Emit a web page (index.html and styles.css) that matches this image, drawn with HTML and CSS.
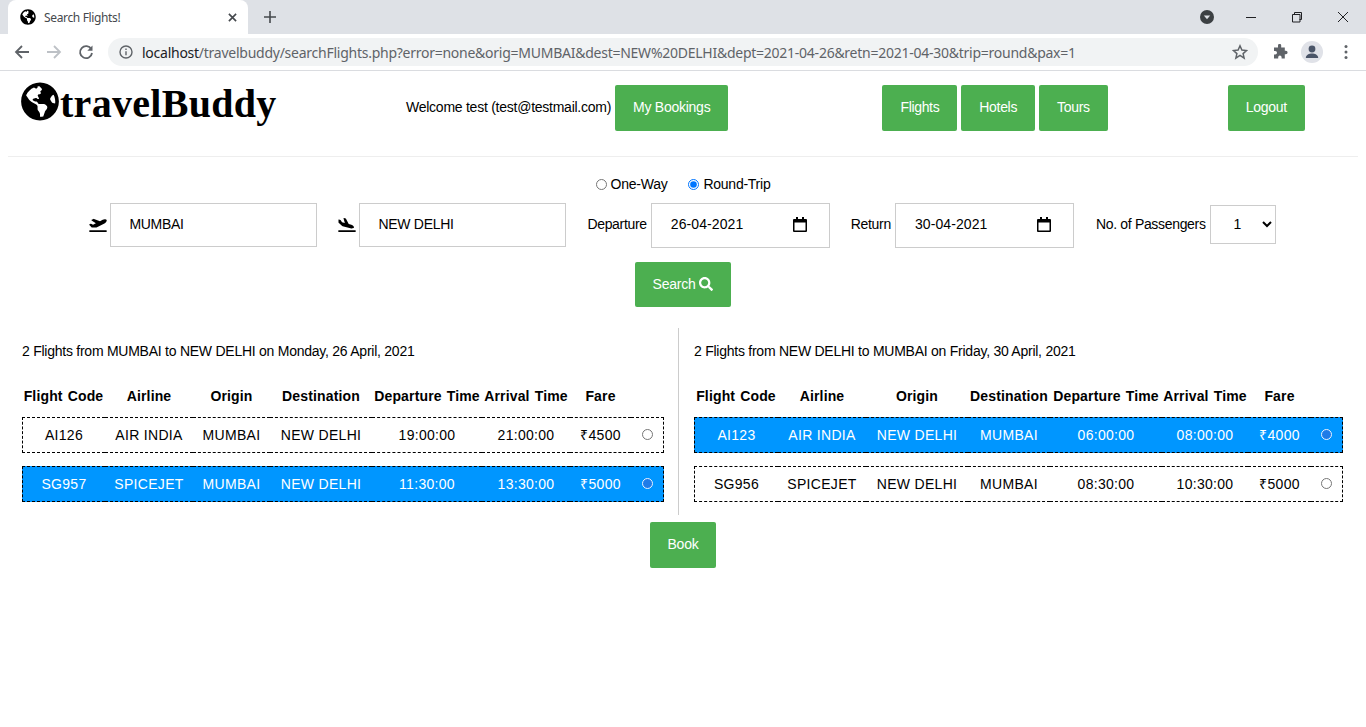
FILE: index.html
```html
<!DOCTYPE html>
<html lang="en">
<head>
<meta charset="utf-8">
<title>Search Flights!</title>
<link rel="stylesheet" href="styles.css">
</head>
<body>
<div class="browser">
  <div class="tabstrip">
    <div class="tab">
      <svg class="tab-globe" viewBox="0 0 496 512"><path d="M248 8C111.03 8 0 119.03 0 256s111.03 248 248 248 248-111.03 248-248S384.97 8 248 8zm82.29 357.6c-3.9 3.88-7.99 7.95-11.31 11.28-2.99 3-5.1 6.7-6.17 10.71-1.51 5.66-2.73 11.38-4.77 16.87l-17.39 46.85c-13.76 3-28 4.69-42.65 4.69v-27.38c1.69-12.62-7.64-36.26-22.63-51.25-6-6-9.37-14.14-9.37-22.63v-32.01c0-11.64-6.27-22.34-16.46-27.97-14.37-7.95-34.81-19.06-48.81-26.11-11.48-5.78-22.1-13.14-31.65-21.75l-.8-.72a114.792 114.792 0 0 1-18.06-20.74c-9.38-13.77-24.66-36.42-34.59-51.14 20.47-45.5 57.36-82.04 103.2-101.89l24.01 12.01C203.48 89.74 216 82.01 216 70.11v-11.3c7.99-1.29 16.12-2.11 24.48-2.45l28.3 28.3c6.25 6.25 6.25 16.38 0 22.63L264 112l-10.34 10.34c-3.12 3.12-3.12 8.19 0 11.31l4.69 4.69c3.12 3.12 3.12 8.19 0 11.31l-8 8a8.008 8.008 0 0 1-5.66 2.34h-8.99c-2.08 0-4.08.81-5.58 2.27l-9.92 9.65a8.008 8.008 0 0 0-1.58 9.31l15.59 31.19c2.66 5.32-1.21 11.58-7.15 11.58h-5.64c-1.93 0-3.79-.7-5.24-1.96l-9.28-8.06a16.017 16.017 0 0 0-15.55-3.1l-31.17 10.39a11.95 11.95 0 0 0-8.17 11.34c0 4.53 2.56 8.66 6.61 10.69l11.08 5.54c9.41 4.71 19.79 7.16 30.31 7.16s22.59 27.29 32 32h66.75c8.49 0 16.62 3.37 22.63 9.37l13.69 13.69a30.503 30.503 0 0 1 8.93 21.57 46.536 46.536 0 0 1-13.72 32.98zM417 274.25c-5.79-1.45-10.84-5-14.15-9.97l-17.98-26.97a23.97 23.97 0 0 1 0-26.62l19.59-29.38c2.32-3.47 5.5-6.29 9.24-8.15l12.98-6.49C440.2 193.59 448 223.87 448 256c0 8.67-.74 17.16-1.82 25.54L417 274.25z"/></svg>
      <span class="tab-title">Search Flights!</span>
      <svg class="tab-close" viewBox="0 0 10 10"><path d="M1 1l8 8M9 1l-8 8"/></svg>
    </div>
    <svg class="new-tab" viewBox="0 0 12 12"><path d="M6 0v12M0 6h12"/></svg>
    <div class="window-controls">
      <svg class="media-btn" viewBox="0 0 14 14"><circle cx="7" cy="7" r="7"/><path class="media-tri" d="M3.8 5.4h6.4L7 9.2z"/></svg>
      <svg class="win-btn" viewBox="0 0 12 12"><path d="M1 6.5h10"/></svg>
      <svg class="win-btn" viewBox="0 0 12 12"><path d="M1.5 3.5h7.5v7.5h-7.5zM3.5 3.5v-2h7v7h-2"/></svg>
      <svg class="win-btn" viewBox="0 0 12 12"><path d="M1 1l10 10M11 1l-10 10"/></svg>
    </div>
  </div>
  <div class="toolbar">
    <svg class="nav-icon" viewBox="0 0 16 16"><path d="M15 8H2M8 2L2 8l6 6"/></svg>
    <svg class="nav-icon nav-off" viewBox="0 0 16 16"><path d="M1 8h13M8 2l6 6-6 6"/></svg>
    <svg class="nav-icon" viewBox="0 0 16 16"><path d="M13.3 5.2A6 6 0 1 0 14 9"/><path class="nav-fill" d="M14.5 1.5v5.2H9.3z"/></svg>
    <div class="omnibox">
      <svg class="info-icon" viewBox="0 0 14 14"><circle cx="7" cy="7" r="6"/><path d="M7 6.2v4M7 3.6v1.4"/></svg>
      <span class="url"><span class="url-host">localhost</span>/travelbuddy/searchFlights.php?error=none&amp;orig=MUMBAI&amp;dest=NEW%20DELHI&amp;dept=2021-04-26&amp;retn=2021-04-30&amp;trip=round&amp;pax=1</span>
      <svg class="star-icon" viewBox="0 0 16 16"><path d="M8 1.8l1.9 4.2 4.6.5-3.4 3.1 1 4.5L8 11.3l-4.1 2.8 1-4.5-3.4-3.1 4.6-.5z"/></svg>
    </div>
    <svg class="puzzle" viewBox="0 0 16 16"><path d="M6 1.5a1.6 1.6 0 0 1 3.2 0V3.4h3.6v3.4h1.1a1.7 1.7 0 0 1 0 3.4h-1.1v4.3H9.6v-1.2a1.7 1.7 0 0 0-3.4 0v1.2H2V10.6h1.2a1.8 1.8 0 0 0 0-3.6H2V3.4h4z"/></svg>
    <div class="avatar"><svg viewBox="0 0 22 22"><circle cx="11" cy="8" r="3.4"/><path d="M4.8 17c0-3 3.4-4.4 6.2-4.4s6.2 1.4 6.2 4.4z"/></svg></div>
    <svg class="kebab" viewBox="0 0 4 16"><circle cx="2" cy="2.5" r="1.5"/><circle cx="2" cy="8" r="1.5"/><circle cx="2" cy="13.5" r="1.5"/></svg>
  </div>
</div>

<header class="site-header">
  <div class="logo">
    <svg class="logo-globe" viewBox="0 0 496 512"><path d="M248 8C111.03 8 0 119.03 0 256s111.03 248 248 248 248-111.03 248-248S384.97 8 248 8zm82.29 357.6c-3.9 3.88-7.99 7.95-11.31 11.28-2.99 3-5.1 6.7-6.17 10.71-1.51 5.66-2.73 11.38-4.77 16.87l-17.39 46.85c-13.76 3-28 4.69-42.65 4.69v-27.38c1.69-12.62-7.64-36.26-22.63-51.25-6-6-9.37-14.14-9.37-22.63v-32.01c0-11.64-6.27-22.34-16.46-27.97-14.37-7.95-34.81-19.06-48.81-26.11-11.48-5.78-22.1-13.14-31.65-21.75l-.8-.72a114.792 114.792 0 0 1-18.06-20.74c-9.38-13.77-24.66-36.42-34.59-51.14 20.47-45.5 57.36-82.04 103.2-101.89l24.01 12.01C203.48 89.74 216 82.01 216 70.11v-11.3c7.99-1.29 16.12-2.11 24.48-2.45l28.3 28.3c6.25 6.25 6.25 16.38 0 22.63L264 112l-10.34 10.34c-3.12 3.12-3.12 8.19 0 11.31l4.69 4.69c3.12 3.12 3.12 8.19 0 11.31l-8 8a8.008 8.008 0 0 1-5.66 2.34h-8.99c-2.08 0-4.08.81-5.58 2.27l-9.92 9.65a8.008 8.008 0 0 0-1.58 9.31l15.59 31.19c2.66 5.32-1.21 11.58-7.15 11.58h-5.64c-1.93 0-3.79-.7-5.24-1.96l-9.28-8.06a16.017 16.017 0 0 0-15.55-3.1l-31.17 10.39a11.95 11.95 0 0 0-8.17 11.34c0 4.53 2.56 8.66 6.61 10.69l11.08 5.54c9.41 4.71 19.79 7.16 30.31 7.16s22.59 27.29 32 32h66.75c8.49 0 16.62 3.37 22.63 9.37l13.69 13.69a30.503 30.503 0 0 1 8.93 21.57 46.536 46.536 0 0 1-13.72 32.98zM417 274.25c-5.79-1.45-10.84-5-14.15-9.97l-17.98-26.97a23.97 23.97 0 0 1 0-26.62l19.59-29.38c2.32-3.47 5.5-6.29 9.24-8.15l12.98-6.49C440.2 193.59 448 223.87 448 256c0 8.67-.74 17.16-1.82 25.54L417 274.25z"/></svg><span class="logo-text">travelBuddy</span>
  </div>
  <div class="account">
    <span class="welcome">Welcome test (test@testmail.com)</span>
    <a class="btn">My Bookings</a>
  </div>
  <nav class="main-nav">
    <a class="btn">Flights</a>
    <a class="btn">Hotels</a>
    <a class="btn">Tours</a>
  </nav>
  <a class="btn btn-logout">Logout</a>
</header>

<main class="content">
  <form class="search">
    <div class="trip-type">
      <label class="trip-option"><input type="radio" name="trip"> One-Way</label>
      <label class="trip-option"><input type="radio" name="trip" checked> Round-Trip</label>
    </div>
    <div class="fields">
      <div class="group">
        <svg class="plane" viewBox="0 0 640 512"><path d="M624 448H16c-8.84 0-16 7.16-16 16v32c0 8.84 7.16 16 16 16h608c8.84 0 16-7.16 16-16v-32c0-8.84-7.16-16-16-16zM80.55 341.27c6.28 6.84 15.1 10.72 24.33 10.71l130.54-.18a65.62 65.62 0 0 0 29.64-7.12l290.96-147.65c26.74-13.57 50.71-32.94 67.02-58.31 18.31-28.48 20.3-49.09 13.07-63.65-7.21-14.57-24.74-25.27-58.25-27.45-29.85-1.94-59.54 5.92-86.28 19.48l-98.51 49.99-218.7-82.06a17.799 17.799 0 0 0-18-1.11L90.62 67.29c-10.67 5.41-13.25 19.65-5.17 28.53l156.22 98.1-103.21 52.38-72.35-36.47a17.804 17.804 0 0 0-16.07.02L9.91 230.22c-10.44 5.3-13.19 19.12-5.57 28.08l76.21 82.97z"/></svg>
        <input class="text-field" type="text" value="MUMBAI">
      </div>
      <div class="group">
        <svg class="plane" viewBox="0 0 640 512"><path d="M624 448H16c-8.84 0-16 7.16-16 16v32c0 8.84 7.16 16 16 16h608c8.84 0 16-7.16 16-16v-32c0-8.84-7.16-16-16-16zM44.81 205.66l88.74 80a62.607 62.607 0 0 0 25.47 13.93l287.6 78.35c26.48 7.21 54.56 8.72 81 1.36 29.67-8.27 43.44-21.21 47.25-35.71 3.83-14.5-1.73-32.71-23.37-54.96-19.3-19.85-44.98-33.46-71.46-40.67l-97.51-26.56L282.8 30.22c-1.51-5.81-5.95-10.35-11.66-11.91L212.35 2.3c-9.54-2.6-18.93 4.61-18.69 14.5l46.9 167.6-102.1-27.82L89.34 79.44c-1.49-4.71-5.2-8.37-9.89-9.75L26.35 55.3c-9.63-2.62-18.98 4.75-18.57 14.73l2.76 93.3c.26 8.2 3.86 15.95 9.99 21.44l24.28 20.89z"/></svg>
        <input class="text-field" type="text" value="NEW DELHI">
      </div>
      <div class="group">
        <span class="field-label">Departure</span>
        <div class="date-field"><span class="date-text">26-04-2021</span><svg class="cal" viewBox="0 0 14 15"><path d="M3 0h2v2h4V0h2v2h2a1 1 0 0 1 1 1v11a1 1 0 0 1-1 1H1a1 1 0 0 1-1-1V3a1 1 0 0 1 1-1h2zM1.5 5.5v8h11v-8z"/></svg></div>
      </div>
      <div class="group">
        <span class="field-label">Return</span>
        <div class="date-field"><span class="date-text">30-04-2021</span><svg class="cal" viewBox="0 0 14 15"><path d="M3 0h2v2h4V0h2v2h2a1 1 0 0 1 1 1v11a1 1 0 0 1-1 1H1a1 1 0 0 1-1-1V3a1 1 0 0 1 1-1h2zM1.5 5.5v8h11v-8z"/></svg></div>
      </div>
      <div class="group">
        <span class="field-label">No. of Passengers</span>
        <select class="pax"><option>1</option></select>
      </div>
    </div>
    <button class="btn btn-search" type="button">Search <svg class="search-icon" viewBox="0 0 512 512"><path d="M505 442.7L405.3 343c-4.5-4.5-10.6-7-17-7H372c27.6-35.3 44-79.7 44-128C416 93.1 322.9 0 208 0S0 93.1 0 208s93.1 208 208 208c48.3 0 92.7-16.4 128-44v16.3c0 6.4 2.5 12.5 7 17l99.7 99.7c9.4 9.4 24.6 9.4 33.9 0l28.3-28.3c9.4-9.4 9.4-24.6.1-34zM208 336c-70.7 0-128-57.2-128-128 0-70.7 57.2-128 128-128 70.7 0 128 57.2 128 128 0 70.7-57.2 128-128 128z"/></svg></button>
  </form>

  <section class="results">
    <div class="panel panel-left">
      <p class="summary">2 Flights from MUMBAI to NEW DELHI on Monday, 26 April, 2021</p>
      <table class="flights flights-left">
        <colgroup><col class="c1"><col class="c2"><col class="c3"><col class="c4"><col class="c5"><col class="c6"><col class="c7"><col class="c8"></colgroup>
        <thead><tr><th>Flight Code</th><th>Airline</th><th>Origin</th><th>Destination</th><th>Departure Time</th><th>Arrival Time</th><th>Fare</th><th></th></tr></thead>
        <tbody>
          <tr><td>AI126</td><td>AIR INDIA</td><td>MUMBAI</td><td>NEW DELHI</td><td>19:00:00</td><td>21:00:00</td><td>₹4500</td><td><span class="pick"></span></td></tr>
          <tr class="selected"><td>SG957</td><td>SPICEJET</td><td>MUMBAI</td><td>NEW DELHI</td><td>11:30:00</td><td>13:30:00</td><td>₹5000</td><td><span class="pick"></span></td></tr>
        </tbody>
      </table>
    </div>
    <div class="panel panel-right">
      <p class="summary">2 Flights from NEW DELHI to MUMBAI on Friday, 30 April, 2021</p>
      <table class="flights flights-right">
        <colgroup><col class="c1"><col class="c2"><col class="c3"><col class="c4"><col class="c5"><col class="c6"><col class="c7"><col class="c8"></colgroup>
        <thead><tr><th>Flight Code</th><th>Airline</th><th>Origin</th><th>Destination</th><th>Departure Time</th><th>Arrival Time</th><th>Fare</th><th></th></tr></thead>
        <tbody>
          <tr class="selected"><td>AI123</td><td>AIR INDIA</td><td>NEW DELHI</td><td>MUMBAI</td><td>06:00:00</td><td>08:00:00</td><td>₹4000</td><td><span class="pick"></span></td></tr>
          <tr><td>SG956</td><td>SPICEJET</td><td>NEW DELHI</td><td>MUMBAI</td><td>08:30:00</td><td>10:30:00</td><td>₹5000</td><td><span class="pick"></span></td></tr>
        </tbody>
      </table>
    </div>
  </section>
  <div class="book-row"><a class="btn">Book</a></div>
</main>
</body>
</html>
```
FILE: styles.css
```css
* { box-sizing: border-box; }
html, body { margin: 0; padding: 0; height: 100%; overflow: hidden; }
body { background: #fff; color: #000; font-family: "Liberation Sans", Arial, sans-serif; font-size: 14px; letter-spacing: -0.25px; }

/* browser chrome */
.browser { height: 71px; border-bottom: 1px solid #dadce0; font-family: "Noto Sans", "Open Sans", sans-serif; letter-spacing: 0; }
.tabstrip { height: 34px; background: #dee1e6; display: flex; align-items: center; padding-left: 8px; }
.tab { width: 240px; height: 34px; background: #fff; border-radius: 8px 8px 0 0; display: flex; align-items: center; padding: 0 11px 0 12px; }
.tab-globe { width: 16px; height: 16px; fill: #000; }
.tab-title { margin-left: 8px; flex: 1; font-size: 12px; letter-spacing: -0.35px; color: #45494d; }
.tab-close { width: 9px; height: 9px; fill: none; stroke: #45494d; stroke-width: 1.8; }
.new-tab { width: 12px; height: 12px; margin-left: 16px; fill: none; stroke: #45494d; stroke-width: 1.6; }
.window-controls { margin-left: auto; display: flex; align-items: center; height: 34px; }
.media-btn { width: 14px; height: 14px; fill: #3c4043; margin-right: 31px; }
.media-btn .media-tri { fill: #dee1e6; }
.win-btn { width: 12px; height: 12px; fill: none; stroke: #202124; stroke-width: 1; margin-right: 34px; }
.win-btn:last-child { margin-right: 17px; }

.toolbar { height: 36px; display: flex; align-items: center; padding-left: 14px; background: #fff; }
.nav-icon { width: 16px; height: 16px; margin-right: 16px; fill: none; stroke: #5f6368; stroke-width: 1.8; }
.nav-off { stroke: #bdc1c6; }
.nav-fill { fill: #5f6368; stroke: none; }
.omnibox { width: 1150px; height: 28px; margin-left: -2px; background: #f1f3f4; border-radius: 14px; display: flex; align-items: center; padding-left: 11px; }
.info-icon { width: 14px; height: 14px; fill: none; stroke: #5f6368; stroke-width: 1.4; }
.url { margin-left: 9px; flex: 1; font-size: 14px; letter-spacing: -0.255px; color: #5f6368; white-space: nowrap; }
.url-host { color: #202124; }
.star-icon { width: 16px; height: 16px; margin-right: 10px; fill: none; stroke: #5f6368; stroke-width: 1.5; }
.puzzle { width: 16px; height: 16px; margin-left: 14px; fill: #5f6368; }
.avatar { width: 22px; height: 22px; margin-left: 13px; border-radius: 50%; background: #e0e2e8; }
.avatar svg { display: block; width: 22px; height: 22px; fill: #4a5568; }
.kebab { width: 4px; height: 16px; margin-left: 21px; fill: #5f6368; }

/* site header */
.btn { display: inline-block; background: #4caf50; color: #fff; border: 0; border-radius: 2px; padding: 14px 18px 16px; font: 14px/16px "Liberation Sans", Arial, sans-serif; letter-spacing: -0.25px; }
.site-header { margin: 0 8px; height: 86px; border-bottom: 1px solid #eee; display: flex; align-items: flex-start; padding-top: 14px; }
.logo { width: 385px; margin: -5px 0 0 13px; height: 48px; display: flex; align-items: center; font: bold 40px/46px "Liberation Serif", "Times New Roman", serif; letter-spacing: 0.3px; }
.logo-globe { width: 38px; height: 39px; margin: -5px 1px 0 0; fill: #000; }
.account { display: flex; align-items: center; }
.welcome { width: 209px; white-space: nowrap; margin-bottom: 2px; }
.main-nav { margin-left: 154px; display: flex; gap: 4px; }
.main-nav .btn { letter-spacing: -0.33px; }
.btn-logout { margin-left: 120px; }

/* search */
.search { display: flex; flex-direction: column; align-items: center; }
.trip-type { height: 45px; padding-top: 20px; display: flex; gap: 21px; }
.trip-option { display: flex; align-items: center; height: 14px; }
.trip-option input { margin: 0 4px 0 0; width: 11px; height: 11px; }
.fields { display: flex; align-items: center; height: 46px; padding-right: 1px; }
.group { display: flex; align-items: center; margin-left: 21px; }
.group:first-child { margin-left: 0; }
.group:last-child { margin-left: 22px; }
.plane { width: 18px; height: 14px; margin: 0 3px 1px 0; fill: #000; }
.text-field { width: 207px; height: 44px; border: 1px solid #ccc; padding: 0 18px 2px; font: 14px "Liberation Sans", Arial, sans-serif; letter-spacing: -0.28px; color: #000; background: #fff; outline: 0; border-radius: 0; }
.field-label { margin: 0 4px 2px 0; letter-spacing: -0.32px; }
.date-field { width: 179px; height: 45px; border: 1px solid #ccc; padding: 0 22px 0 19px; display: flex; align-items: center; justify-content: space-between; }
.date-text { letter-spacing: 0.1px; margin-bottom: 2px; }
.cal { width: 14px; height: 15px; margin-bottom: 2px; fill: #000; }
.pax { width: 66px; height: 39px; margin-bottom: 2px; border: 1px solid #ccc; background: #fff; padding-left: 19px; font: 14px "Liberation Sans", Arial, sans-serif; border-radius: 0; }
.btn-search { margin-top: 14px; padding: 13px 18px 15px; height: 45px; display: flex; align-items: center; gap: 4px; }
.search-icon { width: 14px; height: 14px; fill: #fff; }

/* results */
.results { display: flex; margin-top: 21px; height: 187px; }
.panel { padding-top: 16px; }
.panel-left { width: 671px; margin-left: 8px; padding-left: 14px; border-right: 1px solid #ccc; }
.panel-right { padding-left: 15px; }
.summary { margin: 0; line-height: 14px; }
.flights { border-collapse: separate; border-spacing: 0 13px; table-layout: fixed; margin-top: 17px; }
.flights-left { width: 642px; }
.flights-right { width: 649px; }
.flights th { font-weight: bold; letter-spacing: 0.15px; word-spacing: 1px; height: 16px; line-height: 16px; padding: 0; white-space: nowrap; text-align: center; }
.flights td { height: 36px; line-height: 16px; padding: 0; text-align: center; white-space: nowrap; border-top: 1px dashed #000; border-bottom: 1px dashed #000; letter-spacing: 0.3px; }
.flights td:first-child { border-left: 1px dashed #000; }
.flights td:last-child { border-right: 1px dashed #000; }
.selected td { background: #0096ff; color: #fff; }
.pick { display: inline-block; width: 11px; height: 11px; border-radius: 50%; border: 1px solid #767676; background: #fff; vertical-align: 0; }
.selected .pick { border: 1.5px solid #e8f2ff; background: #1f7be8; }

.flights-left .c1 { width: 83px; } .flights-left .c2 { width: 88px; } .flights-left .c3 { width: 77px; } .flights-left .c4 { width: 102px; }
.flights-left .c5 { width: 110px; } .flights-left .c6 { width: 88px; } .flights-left .c7 { width: 61px; } .flights-left .c8 { width: 33px; }
.flights-right .c1 { width: 84px; } .flights-right .c2 { width: 88px; } .flights-right .c3 { width: 102px; } .flights-right .c4 { width: 82px; }
.flights-right .c5 { width: 112px; } .flights-right .c6 { width: 86px; } .flights-right .c7 { width: 63px; } .flights-right .c8 { width: 32px; }

.book-row { display: flex; justify-content: center; margin-top: 7px; }
```
